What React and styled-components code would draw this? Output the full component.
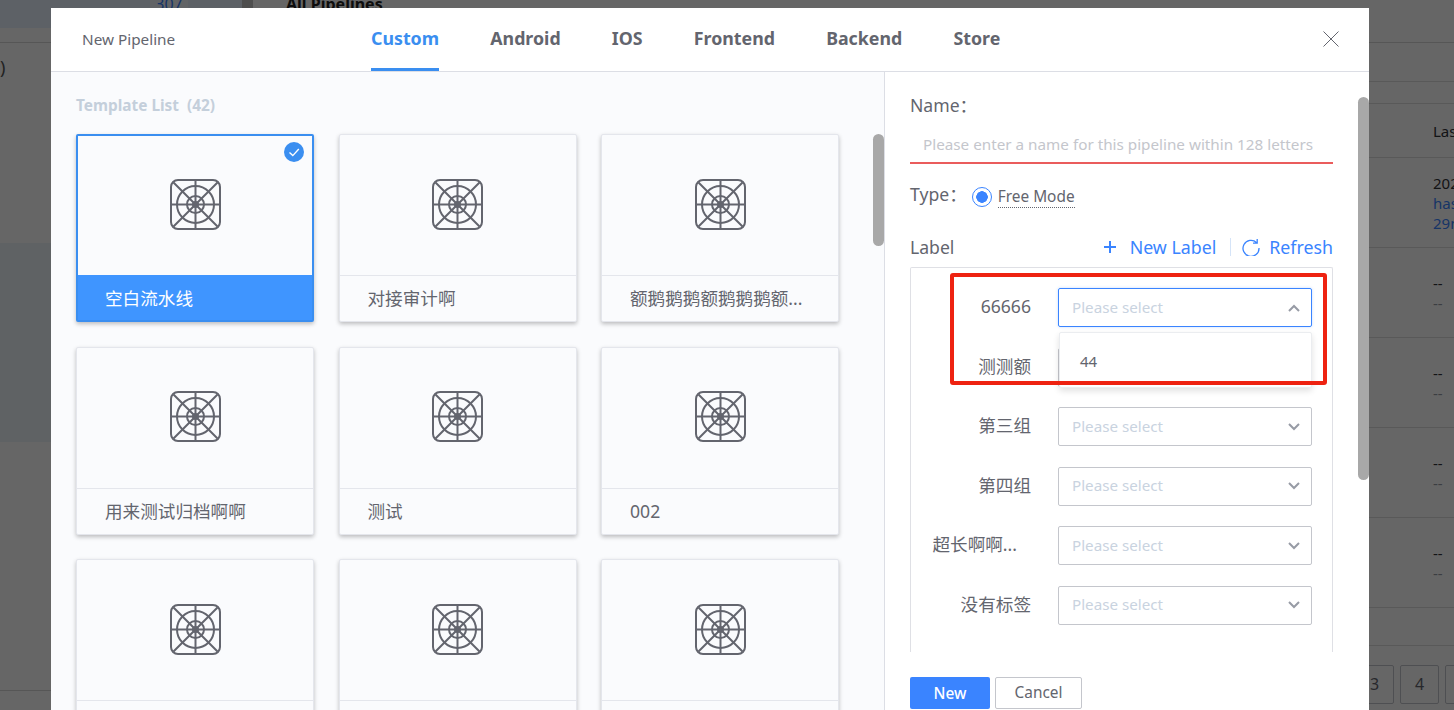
import React from 'react';
import styled, { createGlobalStyle } from 'styled-components';

const SANS = `"Noto Sans", "Open Sans", "Noto Sans CJK SC", sans-serif`;
const CJK = `"Noto Sans", "Noto Sans CJK SC", sans-serif`;

const tabs = ['Custom', 'Android', 'IOS', 'Frontend', 'Backend', 'Store'];

const templates = [
  '空白流水线',
  '对接审计啊',
  '额鹅鹅鹅额鹅鹅鹅额...',
  '用来测试归档啊啊',
  '测试',
  '002',
  '',
  '',
  '',
];

const labelRows = ['66666', '测测额', '第三组', '第四组', '超长啊啊...', '没有标签'];

const tableRows = [
  ['2024-01-01', 'hash', '29min'],
  ['--', '--'],
  ['--', '--'],
  ['--', '--'],
  ['--', '--'],
];

const TemplateIcon = () => (
  <svg width="51" height="51" viewBox="0 0 51 51" fill="none" stroke="#63656e" strokeWidth="2">
    <rect x="1" y="1" width="49" height="49" rx="7" />
    <circle cx="25.5" cy="25.5" r="18.5" />
    <circle cx="25.5" cy="25.5" r="8.5" />
    <circle cx="25.5" cy="25.5" r="2.5" fill="#63656e" />
    <path d="M25.5 1V50M1 25.5H50M3.5 3.5L47.5 47.5M47.5 3.5L3.5 47.5" />
  </svg>
);

const Chevron = ({ up }) => (
  <svg width="12" height="8" viewBox="0 0 12 8" fill="none" stroke="#979ba5" strokeWidth="2">
    <path d={up ? 'M1 7L6 2L11 7' : 'M1 1L6 6L11 1'} />
  </svg>
);

const App = () => {
  return (
    <>
      <GlobalStyle />
      <Page>
        <SideColumn>
          <SideHead>
            <SideBrand>
              <Chip>307</Chip>
            </SideBrand>
          </SideHead>
          <SideParen>)</SideParen>
          <SideBand />
          <SideFoot />
        </SideColumn>
        <MainColumn>
          <PageTitleRow>
            <ScrollGutter />
            <PageTitle>All Pipelines</PageTitle>
          </PageTitleRow>
          <TableRow $height={39} />
          <TableRow $height={22} />
          <TableRow $height={54} $center>
            <Cell>Last Run</Cell>
          </TableRow>
          {tableRows.map((row, i) => (
            <TableRow key={i} $height={90} $center>
              <div>
                {row.map((text, j) => (
                  <Cell key={j} $link={row.length === 3 && j > 0} $muted={row.length === 2 && j === 1}>
                    {text}
                  </Cell>
                ))}
              </div>
            </TableRow>
          ))}
          <TableRow $height={38} />
          <Pager>
            <PageBox>3</PageBox>
            <PageBox>4</PageBox>
            <PageBox>5</PageBox>
          </Pager>
        </MainColumn>
        <Mask />
        <Modal>
          <ModalHeader>
            <ModalTitle>New Pipeline</ModalTitle>
            <Tabs>
              {tabs.map((tab, i) => (
                <Tab key={tab} $active={i === 0}>
                  {tab}
                </Tab>
              ))}
            </Tabs>
            <CloseButton>
              <svg width="16" height="16" viewBox="0 0 16 16" stroke="#63656e" strokeWidth="1">
                <path d="M0.5 0.5L15.5 15.5M15.5 0.5L0.5 15.5" />
              </svg>
            </CloseButton>
          </ModalHeader>
          <ModalBody>
            <TemplatePanel>
              <ListTitle>Template List&nbsp;&nbsp;(42)</ListTitle>
              <CardGrid>
                {templates.map((name, i) => (
                  <Card key={i} $selected={i === 0}>
                    <CardArt>
                      <TemplateIcon />
                    </CardArt>
                    <CardName $selected={i === 0}>{name}</CardName>
                    {i === 0 && (
                      <CheckBadge>
                        <svg width="20" height="20" viewBox="0 0 20 20" fill="none" stroke="#fff" strokeWidth="1.4">
                          <path d="M5.5 10.5L8.8 13.6L14.8 7" />
                        </svg>
                      </CheckBadge>
                    )}
                  </Card>
                ))}
              </CardGrid>
              <ScrollThumb $top={62} $height={112} />
            </TemplatePanel>
            <FormPanel>
              <FieldLabel>Name：</FieldLabel>
              <NameInput>Please enter a name for this pipeline within 128 letters</NameInput>
              <TypeRow>
                <FieldLabel>Type：</FieldLabel>
                <Radio />
                <RadioText>Free Mode</RadioText>
              </TypeRow>
              <LabelHead>
                <FieldLabel>Label</FieldLabel>
                <LabelActions>
                  <ActionLink $gap={13}>
                    <svg width="14" height="14" viewBox="0 0 14 14" stroke="#3a84ff" strokeWidth="2">
                      <path d="M7 1V13M1 7H13" />
                    </svg>
                    New Label
                  </ActionLink>
                  <ActionDivider />
                  <ActionLink $gap={9}>
                    <svg width="18" height="18" viewBox="0 0 18 18" fill="none" stroke="#3a84ff" strokeWidth="1.3">
                      <path d="M14.6 4.6A8 8 0 1 0 17 10M15.2 1V5.2H11" />
                    </svg>
                    Refresh
                  </ActionLink>
                </LabelActions>
              </LabelHead>
              <LabelBox>
                {labelRows.map((name, i) => (
                  <LabelRow key={name}>
                    <LabelName $clipped={name.endsWith('...')}>{name}</LabelName>
                    <Select $open={i === 0}>
                      <SelectHint>Please select</SelectHint>
                      <Chevron up={i === 0} />
                    </Select>
                  </LabelRow>
                ))}
              </LabelBox>
              <Footer>
                <PrimaryButton>New</PrimaryButton>
                <PlainButton>Cancel</PlainButton>
              </Footer>
              <Dropdown>44</Dropdown>
              <Annotation />
              <ScrollThumb $top={25} $height={383} />
            </FormPanel>
          </ModalBody>
        </Modal>
      </Page>
    </>
  );
};

const GlobalStyle = createGlobalStyle`
  html, body {
    margin: 0;
    height: 100%;
    overflow: hidden;
    font-family: ${SANS};
  }
  * {
    box-sizing: border-box;
  }
`;

const Page = styled.div`
  position: relative;
  display: flex;
  width: 1454px;
  height: 710px;
  overflow: hidden;
  background: #fff;
`;

const SideColumn = styled.div`
  display: flex;
  flex-direction: column;
  width: 242px;
  flex-shrink: 0;
`;

const SideHead = styled.div`
  height: 43px;
  border-bottom: 1px solid #d8d8d8;
`;

const SideBrand = styled.div`
  height: 28px;
  padding-left: 150px;
  background: #e8f3ff;
`;

const Chip = styled.div`
  width: 38px;
  height: 9px;
  line-height: 8px;
  font-size: 16px;
  text-align: center;
  color: #3a84ff;
  background: #f5f9ff;
`;

const SideParen = styled.div`
  height: 200px;
  padding-top: 12px;
  font-size: 18px;
  line-height: 24px;
  color: #555;
`;

const SideBand = styled.div`
  height: 199px;
  background: #eef5fb;
`;

const SideFoot = styled.div`
  height: 249px;
  border-bottom: 1px solid #d8d8d8;
`;

const MainColumn = styled.div`
  flex: 1;
  display: flex;
  flex-direction: column;
  min-width: 0;
`;

const PageTitleRow = styled.div`
  display: flex;
  height: 43px;
  border-bottom: 1px solid #d8d8d8;
`;

const ScrollGutter = styled.div`
  width: 11px;
  background: #c4c4c4;
`;

const PageTitle = styled.div`
  margin-left: 33px;
  font-size: 16px;
  font-weight: 700;
  line-height: 8px;
  color: #222;
`;

const TableRow = styled.div`
  display: flex;
  align-items: center;
  flex-shrink: 0;
  height: ${p => p.$height}px;
  padding-left: 1191px;
  border-bottom: 1px solid #dfdfdf;
  white-space: nowrap;
`;

const Cell = styled.div`
  font-size: 15px;
  line-height: 20px;
  color: ${p => (p.$link ? '#3a84ff' : p.$muted ? '#979ba5' : '#313238')};
`;

const Pager = styled.div`
  display: flex;
  gap: 6px;
  padding: 19px 0 0 1113px;
`;

const PageBox = styled.div`
  flex-shrink: 0;
  width: 39px;
  height: 39px;
  border: 1px solid #c4c6cc;
  border-radius: 2px;
  font-size: 16px;
  line-height: 37px;
  text-align: center;
  color: #63656e;
`;

const Mask = styled.div`
  position: absolute;
  inset: 0;
  background: rgba(0, 0, 0, 0.6);
`;

const Modal = styled.div`
  position: absolute;
  left: 51px;
  top: 8px;
  display: flex;
  flex-direction: column;
  width: 1318px;
  height: 702px;
  background: #fff;
`;

const ModalHeader = styled.div`
  position: relative;
  display: flex;
  flex-shrink: 0;
  height: 64px;
  padding-left: 31px;
  border-bottom: 1px solid #dcdee5;
`;

const ModalTitle = styled.div`
  width: 289px;
  font-size: 15.3px;
  line-height: 63px;
  color: #63656e;
`;

const Tabs = styled.div`
  display: flex;
  gap: 51.2px;
`;

const Tab = styled.div`
  height: 63px;
  font-size: 17.8px;
  font-weight: 700;
  line-height: 60px;
  color: ${p => (p.$active ? '#3a8ef0' : '#63656e')};
  border-bottom: 3px solid ${p => (p.$active ? '#3a8ef0' : 'transparent')};
`;

const CloseButton = styled.div`
  position: absolute;
  right: 30px;
  top: 23px;
  width: 16px;
  height: 16px;
  line-height: 0;
`;

const ModalBody = styled.div`
  flex: 1;
  display: flex;
  min-height: 0;
`;

const TemplatePanel = styled.div`
  position: relative;
  width: 834px;
  flex-shrink: 0;
  padding: 24px 0 0 25px;
  overflow: hidden;
  background: #fafbfd;
  border-right: 1px solid #dcdee5;
`;

const ListTitle = styled.div`
  height: 38px;
  font-size: 15.4px;
  font-weight: 700;
  line-height: 20px;
  color: #c4cfdb;
`;

const CardGrid = styled.div`
  display: grid;
  grid-template-columns: repeat(3, 238px);
  column-gap: 24.5px;
  row-gap: 24.5px;
`;

const Card = styled.div`
  position: relative;
  display: flex;
  flex-direction: column;
  height: 188px;
  border: ${p => (p.$selected ? '2px solid #3a8ef0' : '1px solid #e4e6ec')};
  border-radius: 2px;
  background: #fafbfd;
  box-shadow: 0 2px 4px rgba(0, 0, 0, 0.25);
`;

const CardArt = styled.div`
  flex: 1;
  display: flex;
  align-items: center;
  justify-content: center;
  padding-bottom: 2px;
  min-height: 0;
`;

const CardName = styled.div`
  flex-shrink: 0;
  height: ${p => (p.$selected ? 45 : 46)}px;
  padding-left: ${p => (p.$selected ? 27 : 28)}px;
  font-family: ${CJK};
  font-size: 17.6px;
  line-height: 44px;
  white-space: nowrap;
  color: ${p => (p.$selected ? '#fff' : '#63656e')};
  background: ${p => (p.$selected ? '#3f95ff' : 'transparent')};
  border-top: 1px solid ${p => (p.$selected ? '#3f95ff' : '#e4e6ec')};
`;

const CheckBadge = styled.div`
  position: absolute;
  right: 8px;
  top: 6px;
  width: 20px;
  height: 20px;
  line-height: 0;
  border-radius: 50%;
  background: #3a8ef0;
`;

const ScrollThumb = styled.div`
  position: absolute;
  right: 0;
  top: ${p => p.$top}px;
  width: 11px;
  height: ${p => p.$height}px;
  border-radius: 6px;
  background: #a8a8a8;
`;

const FormPanel = styled.div`
  position: relative;
  flex: 1;
  padding: 22px 36px 0 25px;
  overflow: hidden;
`;

const FieldLabel = styled.div`
  font-size: 17.6px;
  line-height: 22px;
  color: #63656e;
`;

const NameInput = styled.div`
  height: 40px;
  margin-top: 8px;
  padding-left: 13px;
  font-size: 15.25px;
  line-height: 40px;
  color: #c4c6cc;
  border-bottom: 2px solid #ea5c5c;
`;

const TypeRow = styled.div`
  display: flex;
  align-items: center;
  margin-top: 19px;
  height: 22px;
`;

const Radio = styled.div`
  width: 20px;
  height: 20px;
  margin: 6px 6px 0 5px;
  border: 1px solid #3a84ff;
  border-radius: 50%;
  background: radial-gradient(circle, #3a84ff 0 5.5px, transparent 6px);
`;

const RadioText = styled.div`
  margin-top: 7px;
  font-size: 15.4px;
  line-height: 20px;
  color: #63656e;
  border-bottom: 1px dotted #63656e;
`;

const LabelHead = styled.div`
  display: flex;
  align-items: center;
  justify-content: space-between;
  height: 26px;
  margin-top: 29px;
`;

const LabelActions = styled.div`
  display: flex;
  align-items: center;
`;

const ActionLink = styled.div`
  display: flex;
  align-items: center;
  gap: ${p => p.$gap}px;
  font-size: 17.8px;
  color: #3a84ff;
`;

const ActionDivider = styled.div`
  width: 1px;
  height: 18px;
  margin: 0 11px 0 14px;
  background: #d5e4f8;
`;

const LabelBox = styled.div`
  height: 385px;
  margin-top: 7px;
  padding: 20px 20px 0 0;
  overflow: hidden;
  border: 1px solid #dfe0e5;
  border-bottom: none;
  border-radius: 2px 2px 0 0;
`;

const LabelRow = styled.div`
  display: flex;
  align-items: center;
  height: 39px;
  margin-bottom: 20.5px;
`;

const LabelName = styled.div`
  width: 120px;
  margin-right: 27px;
  padding-right: ${p => (p.$clipped ? 14 : 0)}px;
  padding-bottom: 4px;
  font-family: ${CJK};
  font-size: 17.6px;
  text-align: right;
  white-space: nowrap;
  color: #63656e;
`;

const Select = styled.div`
  display: flex;
  align-items: center;
  justify-content: space-between;
  width: 254px;
  height: 39px;
  padding: 0 11px 0 13px;
  font-size: 15.2px;
  color: #c9d3df;
  border: 1px solid ${p => (p.$open ? '#3a84ff' : '#c4c6cc')};
  border-radius: 2px;
  box-shadow: ${p => (p.$open ? '0 0 3px rgba(58, 132, 255, 0.3)' : 'none')};
`;

const SelectHint = styled.span`
  padding-bottom: 2px;
`;

const Footer = styled.div`
  display: flex;
  gap: 5px;
  margin-top: 25px;
`;

const PrimaryButton = styled.div`
  width: 80px;
  height: 32px;
  font-size: 15.4px;
  font-weight: 500;
  line-height: 34px;
  text-align: center;
  color: #fff;
  border-radius: 2px;
  background: #3a84ff;
`;

const PlainButton = styled.div`
  width: 87px;
  height: 32px;
  font-size: 15.4px;
  line-height: 30px;
  text-align: center;
  color: #63656e;
  border: 1px solid #c4c6cc;
  border-radius: 2px;
`;

const Dropdown = styled.div`
  position: absolute;
  left: 174px;
  top: 260px;
  width: 253px;
  height: 56px;
  padding-left: 20px;
  font-size: 15px;
  line-height: 56px;
  color: #63656e;
  background: #fff;
  border: 1px solid #ebedf0;
  border-radius: 2px;
  box-shadow: 0 3px 6px rgba(0, 0, 0, 0.12);
`;

const Annotation = styled.div`
  position: absolute;
  left: 65px;
  top: 201px;
  width: 377px;
  height: 112px;
  border: 4px solid #ee2211;
  border-radius: 3px;
`;

export default App;
